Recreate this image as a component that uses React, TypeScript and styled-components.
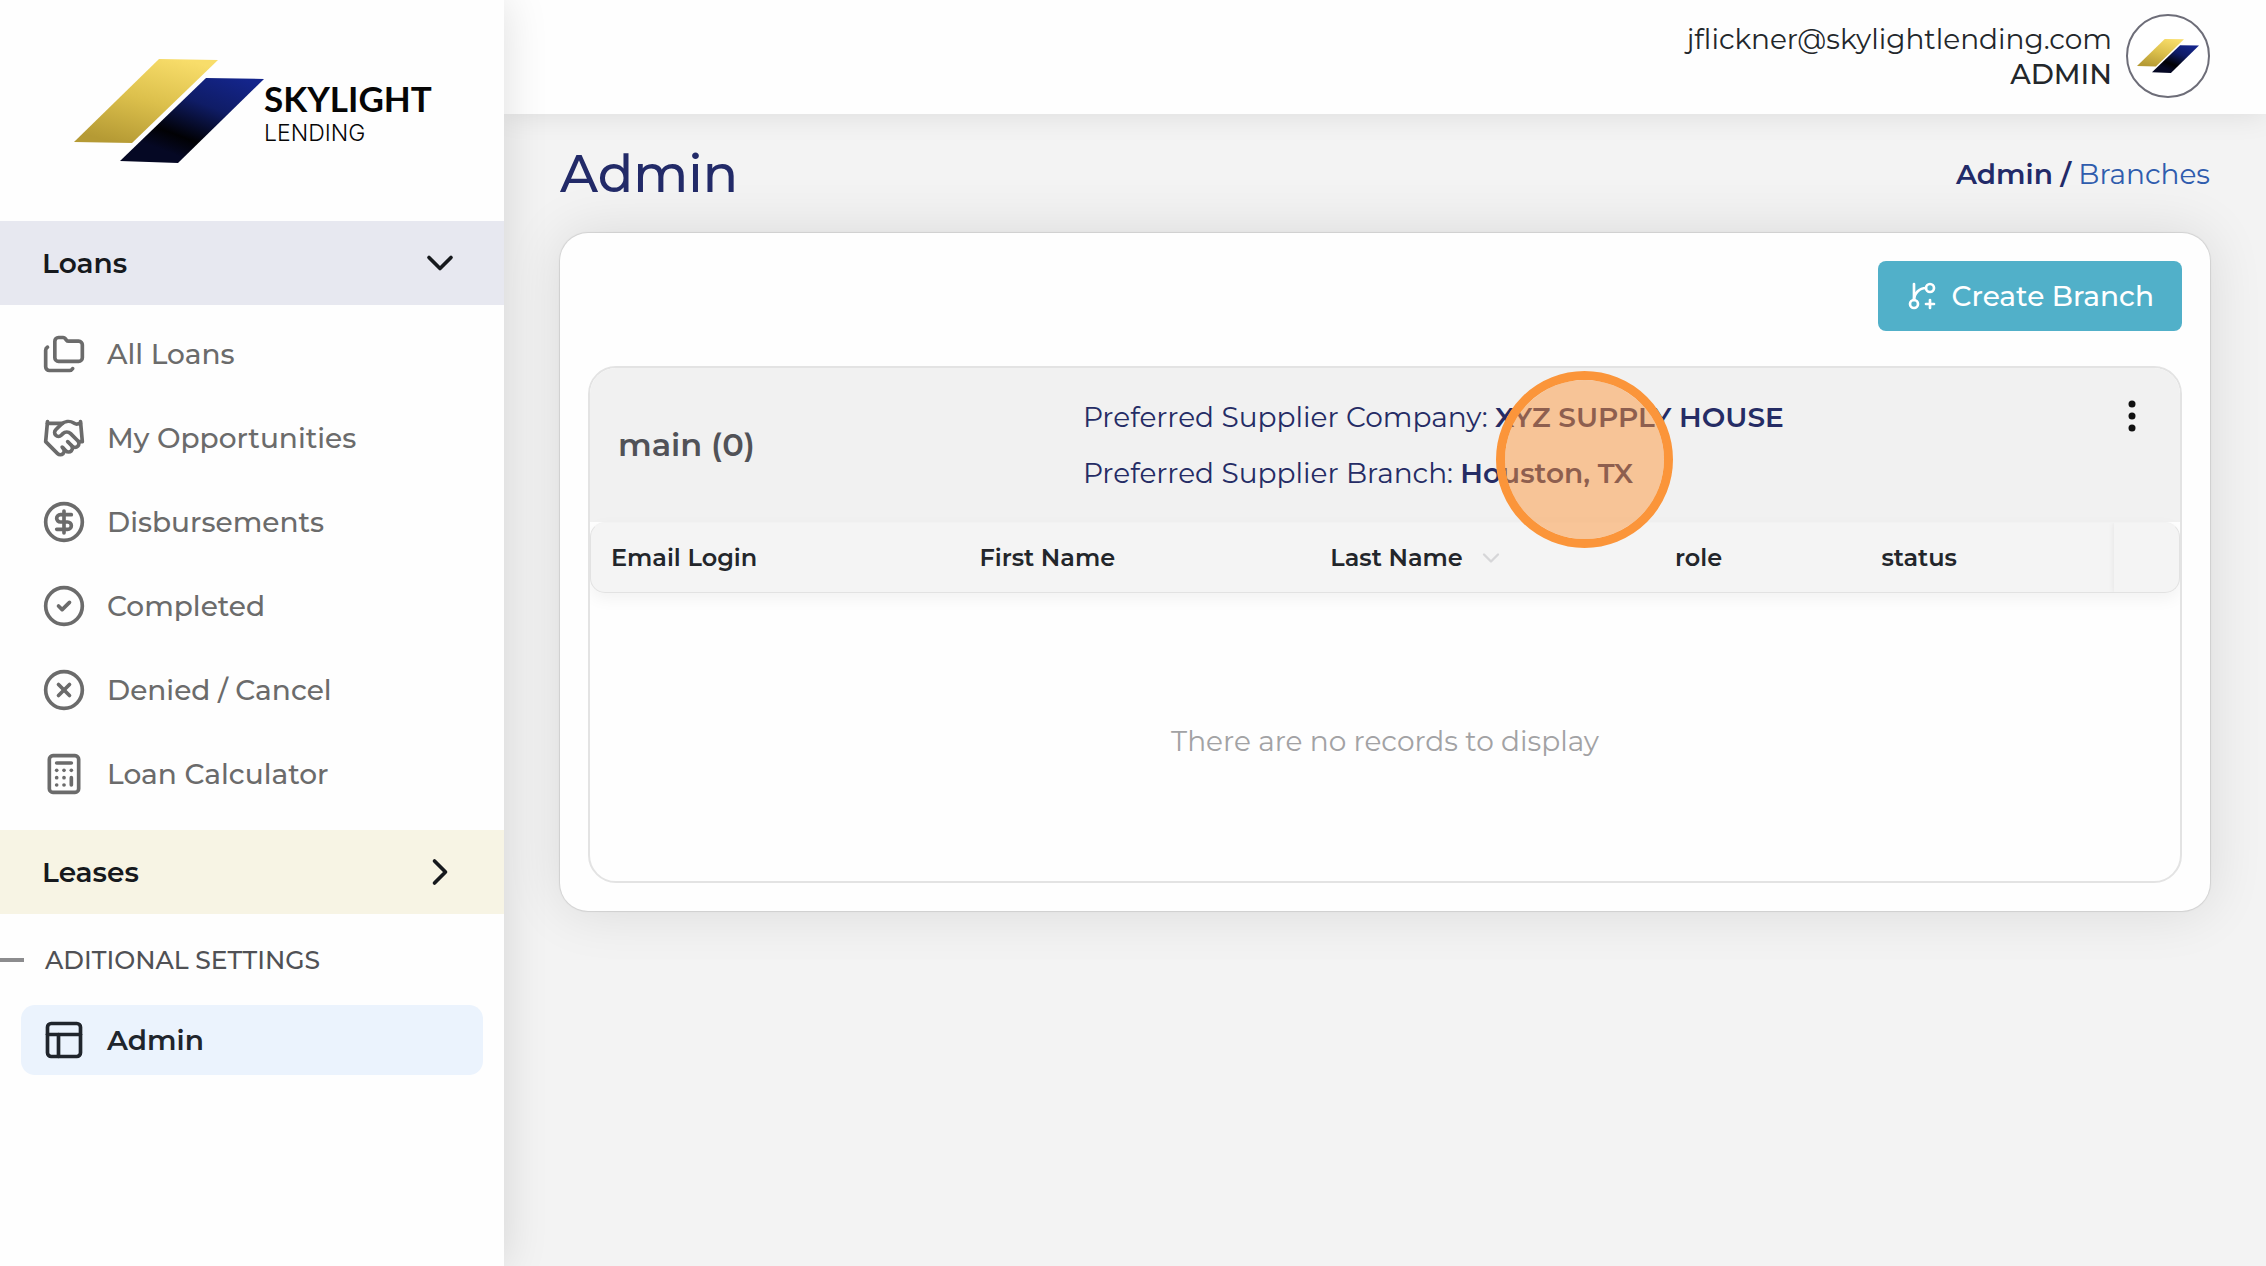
import React from "react";
import styled, { createGlobalStyle, css } from "styled-components";
import {
  Calculator,
  ChevronDown,
  ChevronRight,
  CircleCheck,
  CircleDollarSign,
  CircleX,
  Folders,
  GitBranchPlus,
  Handshake,
  PanelsTopLeft,
  type LucideIcon,
} from "lucide-react";

const GlobalStyle = createGlobalStyle`
  *, *::before, *::after { box-sizing: border-box; }
  body {
    margin: 0;
    background: #f3f3f3;
    color: #23272b;
    font-family: Montserrat, Inter, "Noto Sans", sans-serif;
    font-size: 28px;
    line-height: 36px;
  }
  h1, h2, p { margin: 0; }
  strong { font-weight: 600; }
  a { color: inherit; text-decoration: none; }
  button { font: inherit; border: 0; cursor: pointer; }
`;

const Shell = styled.div`
  display: flex;
  min-height: 100vh;
`;

const Sidebar = styled.aside`
  flex: 0 0 504px;
  background: #fefefe;
  box-shadow: 0 0 42px rgba(0, 0, 0, 0.13);
  z-index: 1;
`;

const Brand = styled.a`
  display: flex;
  align-items: center;
  height: 221px;
  padding: 2px 0 0 74px;
`;

const BrandName = styled.span`
  display: flex;
  flex-direction: column;
  padding-top: 3px;
  color: #060606;
`;

const BrandTop = styled.strong`
  font: 700 35px/40px Lato, sans-serif;
`;

const BrandBottom = styled.span`
  font: 300 23px/30px Inter, sans-serif;
`;

const Section = styled.button<{ $tone: string }>`
  display: flex;
  align-items: center;
  justify-content: space-between;
  width: 100%;
  height: 84px;
  padding: 0 42px;
  background: ${(p) => p.$tone};
  color: #16191d;
  font-weight: 600;
`;

const Menu = styled.nav`
  display: flex;
  flex-direction: column;
  gap: 14px;
  padding: 14px 21px 21px;
`;

const MenuLink = styled.a<{ $active?: boolean }>`
  display: flex;
  align-items: center;
  gap: 21px;
  height: 70px;
  padding: 0 21px;
  border-radius: 14px;
  color: #6b6b6b;
  font-weight: 500;
  ${(p) =>
    p.$active &&
    css`
      background: #ebf3fd;
      color: #20252c;
      font-weight: 600;
    `}
`;

const GroupTitle = styled.h2`
  display: flex;
  align-items: center;
  gap: 21px;
  height: 63px;
  margin-top: 14px;
  color: #505155;
  font-size: 25px;
  font-weight: 500;
  &::before {
    content: "";
    width: 24px;
    height: 4px;
    background: #8c8c8e;
  }
`;

const Content = styled.div`
  flex: 1;
  min-width: 0;
`;

const TopBar = styled.header`
  display: flex;
  align-items: center;
  justify-content: flex-end;
  gap: 14px;
  height: 114px;
  padding: 0 56px 2px;
  background: #fefefe;
  box-shadow: 0 0 28px rgba(0, 0, 0, 0.1);
`;

const Account = styled.div`
  padding-top: 2px;
  line-height: 35px;
  text-align: right;
`;

const Role = styled.div`
  font-weight: 500;
`;

const Avatar = styled.button`
  display: grid;
  place-items: center;
  width: 84px;
  height: 84px;
  padding: 0;
  border: 2px solid #6d6d78;
  border-radius: 50%;
  background: #fff;
`;

const Page = styled.main`
  padding: 28px 56px;
`;

const PageHead = styled.div`
  display: flex;
  align-items: center;
  justify-content: space-between;
  height: 64px;
  margin-bottom: 27px;
  color: #222a68;
`;

const Title = styled.h1`
  font-size: 52px;
  line-height: 64px;
  font-weight: 500;
`;

const Crumb = styled.a`
  color: #2f5cad;
`;

const Card = styled.section`
  padding: 28px;
  border-radius: 28px;
  background: #fefefe;
  box-shadow: 0 0 1px 1px rgba(0, 0, 0, 0.1), 0 0 56px rgba(0, 0, 0, 0.11);
`;

const Actions = styled.div`
  display: flex;
  justify-content: flex-end;
  margin-bottom: 35px;
`;

const CreateButton = styled.button`
  display: flex;
  align-items: center;
  gap: 14px;
  height: 70px;
  padding: 0 28px;
  border-radius: 8px;
  background: #51b0c9;
  color: #fff;
  font-weight: 500;
`;

const Branch = styled.article`
  border: 2px solid #e3e3e3;
  border-radius: 28px;
  overflow: hidden;
`;

const BranchHead = styled.div`
  display: grid;
  grid-template-columns: 31% 1fr;
  align-items: center;
  padding: 21px 0;
  background: #f1f1f1;
`;

const BranchName = styled.h2`
  padding-left: 28px;
  color: #515257;
  font-size: 32px;
  font-weight: 600;
`;

const BranchSide = styled.div`
  display: flex;
  align-items: flex-start;
  justify-content: space-between;
  padding-right: 28px;
`;

const Supplier = styled.div`
  position: relative;
  color: #252c65;
  line-height: 56px;
`;

const ClickMarker = styled.span`
  position: absolute;
  top: -18px;
  left: 413px;
  width: 177px;
  height: 177px;
  border: 9px solid #fb953a;
  border-radius: 50%;
  background: rgba(253, 149, 58, 0.49);
  background-clip: padding-box;
  pointer-events: none;
`;

const KebabButton = styled.button`
  display: grid;
  place-items: center;
  width: 40px;
  height: 54px;
  padding: 0;
  background: none;
  color: #111;
`;

const TableFrame = styled.div`
  border: 1px solid #e2e2e2;
  border-top-color: #f2f2f2;
  border-radius: 15px;
  background: #f4f4f4;
  box-shadow: 0 6px 16px rgba(0, 0, 0, 0.05);
  overflow: hidden;
`;

const Table = styled.table`
  width: 100%;
  table-layout: fixed;
  border-collapse: collapse;
`;

const HeadCell = styled.th<{ $share: number }>`
  width: ${(p) => p.$share}%;
  height: 69px;
  padding: 0 20px;
  text-align: left;
  font-size: 24px;
  font-weight: 600;
  color: #23262b;
  &:last-child {
    box-shadow: 0 0 6px rgba(0, 0, 0, 0.08);
  }
`;

const SortLabel = styled.span`
  display: flex;
  align-items: center;
  gap: 14px;
  svg { color: #d6d6d8; }
`;

const Empty = styled.p`
  display: grid;
  place-items: center;
  height: 288px;
  padding-top: 8px;
  color: #a2a2a4;
`;

const Mark = ({ width, id }: { width: number; id: string }) => (
  <svg width={width} height={(width * 106) / 190} viewBox="0 0 190 106" aria-hidden="true">
    <defs>
      <linearGradient id={`${id}-gold`} x1="0.75" y1="0" x2="0.3" y2="1">
        <stop offset="0" stopColor="#f8dd6a" />
        <stop offset="0.5" stopColor="#dcc04c" />
        <stop offset="1" stopColor="#b59a34" />
      </linearGradient>
      <linearGradient id={`${id}-navy`} x1="0.85" y1="0" x2="0.3" y2="0.85">
        <stop offset="0" stopColor="#14258c" />
        <stop offset="0.4" stopColor="#0f1c66" />
        <stop offset="0.8" stopColor="#010104" />
        <stop offset="1" stopColor="#050824" />
      </linearGradient>
    </defs>
    <polygon points="85,0 144,1 58,84 0,83" fill={`url(#${id}-gold)`} />
    <polygon points="132,19 190,20 104,104 46,102" fill={`url(#${id}-navy)`} />
  </svg>
);

const Kebab = () => (
  <svg width="8" height="32" viewBox="0 0 8 32" fill="currentColor" aria-hidden="true">
    <circle cx="4" cy="4" r="3.5" />
    <circle cx="4" cy="16" r="3.5" />
    <circle cx="4" cy="28" r="3.5" />
  </svg>
);

const loanLinks: { label: string; icon: LucideIcon }[] = [
  { label: "All Loans", icon: Folders },
  { label: "My Opportunities", icon: Handshake },
  { label: "Disbursements", icon: CircleDollarSign },
  { label: "Completed", icon: CircleCheck },
  { label: "Denied / Cancel", icon: CircleX },
  { label: "Loan Calculator", icon: Calculator },
];

const columns = [
  { label: "Email Login", share: 23.2 },
  { label: "First Name", share: 22.1 },
  { label: "Last Name", share: 21.7, sortable: true },
  { label: "role", share: 13 },
  { label: "status", share: 15.9 },
  { label: "", share: 4.1 },
];

export default function App() {
  return (
    <>
      <GlobalStyle />
      <Shell>
        <Sidebar>
          <Brand href="#home">
            <Mark width={190} id="brand" />
            <BrandName>
              <BrandTop>SKYLIGHT</BrandTop>
              <BrandBottom>LENDING</BrandBottom>
            </BrandName>
          </Brand>
          <Section $tone="#e7e8f0" aria-expanded="true">
            Loans
            <ChevronDown size={44} />
          </Section>
          <Menu>
            {loanLinks.map(({ label, icon: Icon }) => (
              <MenuLink key={label} href="#loans">
                <Icon size={44} />
                {label}
              </MenuLink>
            ))}
          </Menu>
          <Section $tone="#f7f4e4" aria-expanded="false">
            Leases
            <ChevronRight size={44} />
          </Section>
          <GroupTitle>ADITIONAL SETTINGS</GroupTitle>
          <Menu>
            <MenuLink href="#admin" $active>
              <PanelsTopLeft size={44} />
              Admin
            </MenuLink>
          </Menu>
        </Sidebar>
        <Content>
          <TopBar>
            <Account>
              <div>jflickner@skylightlending.com</div>
              <Role>ADMIN</Role>
            </Account>
            <Avatar aria-label="Account">
              <Mark width={62} id="avatar" />
            </Avatar>
          </TopBar>
          <Page>
            <PageHead>
              <Title>Admin</Title>
              <nav>
                <strong>Admin /</strong> <Crumb href="#branches">Branches</Crumb>
              </nav>
            </PageHead>
            <Card>
              <Actions>
                <CreateButton>
                  <GitBranchPlus size={32} />
                  Create Branch
                </CreateButton>
              </Actions>
              <Branch>
                <BranchHead>
                  <BranchName>main (0)</BranchName>
                  <BranchSide>
                    <Supplier>
                      <p>
                        Preferred Supplier Company: <strong>XYZ SUPPLY HOUSE</strong>
                      </p>
                      <p>
                        Preferred Supplier Branch: <strong>Houston, TX</strong>
                      </p>
                      <ClickMarker />
                    </Supplier>
                    <KebabButton aria-label="Branch options">
                      <Kebab />
                    </KebabButton>
                  </BranchSide>
                </BranchHead>
                <TableFrame>
                  <Table>
                    <thead>
                      <tr>
                        {columns.map((c) => (
                          <HeadCell key={c.label} $share={c.share} scope="col">
                            {c.sortable ? (
                              <SortLabel>
                                {c.label}
                                <ChevronDown size={28} />
                              </SortLabel>
                            ) : (
                              c.label
                            )}
                          </HeadCell>
                        ))}
                      </tr>
                    </thead>
                  </Table>
                </TableFrame>
                <Empty>There are no records to display</Empty>
              </Branch>
            </Card>
          </Page>
        </Content>
      </Shell>
    </>
  );
}
